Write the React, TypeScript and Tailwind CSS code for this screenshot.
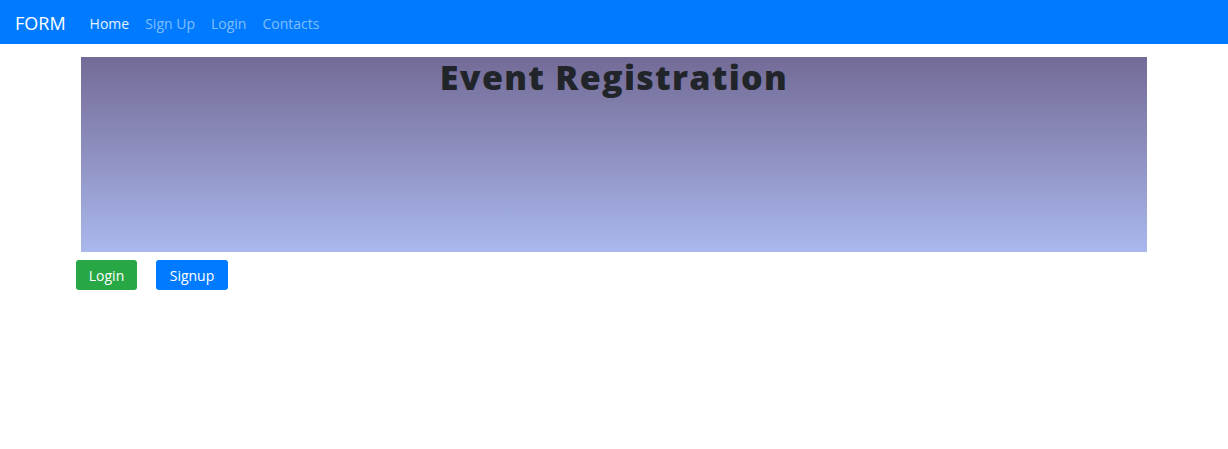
export default function App() {
  const font = { fontFamily: '"Open Sans", "Noto Sans", sans-serif' };
  return (
    <div className="min-h-[449px] bg-white" style={font}>
      {/* navbar */}
      <nav className="flex h-[44px] items-center bg-[#007bff] px-[15px] pt-[2px]">
        <span className="mr-[24px] text-[18px] text-white">FORM</span>
        <div className="flex items-center gap-[16px] text-[14px]">
          <a className="text-white/90">Home</a>
          <a className="text-white/50">Sign Up</a>
          <a className="text-white/50">Login</a>
          <a className="text-white/50">Contacts</a>
        </div>
      </nav>

      {/* banner */}
      <div className="mx-[81px] mt-[13px] h-[195px] bg-gradient-to-b from-[#736b97] to-[#aab8ed]">
        <h1 className="text-center text-[34px] font-extrabold leading-[40px] tracking-[1.3px] text-[#212529]">
          Event Registration
        </h1>
      </div>

      {/* buttons */}
      <div className="ml-[76px] mt-[8px] flex gap-[19px]">
        <button className="h-[30px] w-[61px] rounded-[3px] bg-[#28a745] pt-[1px] text-[14px] text-white">Login</button>
        <button className="h-[30px] w-[72px] rounded-[3px] bg-[#007bff] pt-[1px] text-[14px] text-white">Signup</button>
      </div>
    </div>
  );
}
